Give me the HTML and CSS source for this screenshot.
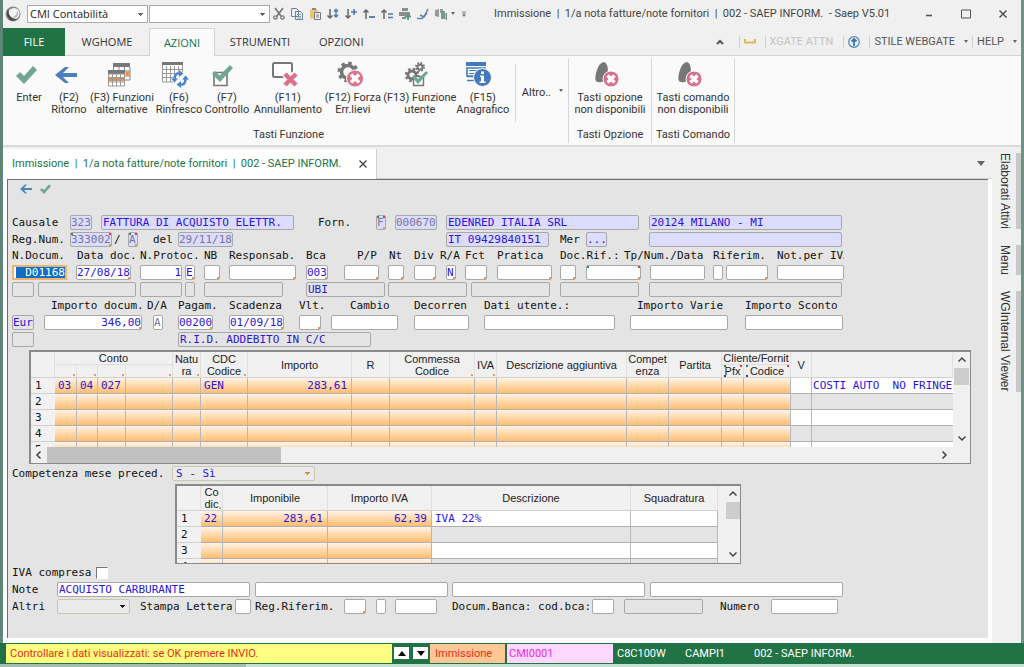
FILE: index.html
```html
<!DOCTYPE html>
<html lang="it">
<head>
<meta charset="utf-8">
<title>Immissione | 1/a nota fatture/note fornitori</title>
<link rel="stylesheet" href="styles.css">
</head>
<body>
<div class="window">
  <header class="titlebar">
    <svg class="app-logo" viewBox="0 0 16 16"><circle cx="8" cy="8" r="7.500" fill="#8c8c8c"/><circle cx="9" cy="7.500" r="5.500" fill="#f4f4f4"/><path d="M3 3Q0 9 5 14Q9 16 12 13Q6 13 4 8Z" fill="#4a4a4a"/><path d="M7 11Q12 10 12 4Q15 9 10 12Z" fill="#bbb"/></svg>
    <div class="pickers">
      <select class="picker" aria-label="Ambiente"><option>CMI Contabilità</option></select>
      <select class="picker" aria-label="Funzione"><option></option></select>
    </div>
    <div class="quick">
      <button aria-label="Taglia"><svg viewBox="0 0 12 12"><path d="M2 0L8 8M10 0L4 8" stroke="#777" stroke-width="1.600" fill="none"/><circle cx="2.500" cy="9.500" r="1.700" fill="none" stroke="#777" stroke-width="1.300"/><circle cx="9.500" cy="9.500" r="1.700" fill="none" stroke="#777" stroke-width="1.300"/></svg></button>
      <button aria-label="Copia"><svg viewBox="0 0 12 12"><path d="M.5 .5h5l2 2v6h-7zM4.500 3.500h5l2 2v6h-7z" fill="#e9eff5" stroke="#6d8199"/><path d="M6 6.500h4M6 8.500h4M6 10h4" stroke="#6d8fb8" stroke-width=".8"/></svg></button>
      <button aria-label="Incolla"><svg viewBox="0 0 12 12"><path d="M1 1.500h8v9H1z" fill="#e8c577"/><path d="M3 0h4v2H3z" fill="#888"/><path d="M5.500 4.500h6v7h-6z" fill="#f4f4f4" stroke="#777"/><path d="M7 7h3M7 9h3" stroke="#777"/></svg></button>
      <button aria-label="Pagina giù"><svg viewBox="0 0 12 12"><path d="M3 1v9M.5 7.500L3 10l2.500-2.500" stroke="#666" stroke-width="1.500" fill="none"/><path d="M9 1v8M7 3.500L9 1.500l2 2M7 7l2 2 2-2" stroke="#4a79b0" stroke-width="1.400" fill="none"/></svg></button>
      <button aria-label="Aggiungi giù"><svg viewBox="0 0 12 12"><path d="M3 1v9M.5 7.500L3 10l2.500-2.500" stroke="#666" stroke-width="1.500" fill="none"/><path d="M9 1v6M6 4h6" stroke="#4a79b0" stroke-width="1.600"/></svg></button>
      <button aria-label="Riga su"><svg viewBox="0 0 12 12"><path d="M3 11V2M.5 4.500L3 2l2.500 2.500" stroke="#666" stroke-width="1.500" fill="none"/><path d="M6 9h6" stroke="#4a79b0" stroke-width="1.800"/></svg></button>
      <button aria-label="Righe su"><svg viewBox="0 0 12 12"><path d="M3 11V2M.5 4.500L3 2l2.500 2.500" stroke="#666" stroke-width="1.500" fill="none"/><path d="M7 6h5M7 9.500h5" stroke="#4a79b0" stroke-width="1.500"/></svg></button>
      <button aria-label="Stampa"><svg viewBox="0 0 12 12"><path d="M3 0h6v3H3zM0 4h11v4H0zM3 9h4v2H3z" fill="#8d8d8d"/><path d="M9 5v7M5.500 8.500H12" stroke="#5a9d7a" stroke-width="2"/></svg></button>
      <button aria-label="Strumenti"><svg viewBox="0 0 12 12"><path d="M11 1L7 9 3 7" stroke="#777" stroke-width="1.400" fill="none"/><path d="M0 10.500h5L10 5" stroke="#5b86c0" stroke-width="1.700" fill="none"/></svg></button>
      <button aria-label="Esporta"><svg viewBox="0 0 12 12"><path d="M0 2l4-1v8l-4-1zM5 1h3v4H5z" fill="#999"/><path d="M6 3h4v8H6z" fill="#6aa186"/><path d="M10.500 5H12v7h-1.500z" fill="#888"/></svg></button>
    </div>
    <span class="caret"></span>
    <svg class="more" viewBox="0 0 6 8"><path d="M0 1h6M0 3.500h6" stroke="#666"/><path d="M0 5h6L3 8z" fill="#666"/></svg>
    <h1 class="title">Immissione &nbsp;|&nbsp; 1/a nota fatture/note fornitori &nbsp;|&nbsp; 002 - SAEP INFORM. &nbsp;- Saep V5.01</h1>
    <div class="winbtns">
      <button aria-label="Riduci"><svg viewBox="0 0 10 10"><path d="M2 6.500h6" stroke="#555" stroke-width="1.600"/></svg></button>
      <button aria-label="Ingrandisci"><svg viewBox="0 0 10 10"><path d="M.5 1h9v8h-9z" fill="none" stroke="#555"/></svg></button>
      <button aria-label="Chiudi"><svg viewBox="0 0 10 10"><path d="M1.500 1.500l7 7M8.500 1.500l-7 7" stroke="#444" stroke-width="1.300"/></svg></button>
    </div>
  </header>

  <nav class="tabs">
    <button class="tab file">FILE</button>
    <button class="tab home">WGHOME</button>
    <button class="tab active">AZIONI</button>
    <button class="tab tools">STRUMENTI</button>
    <button class="tab">OPZIONI</button>
    <div class="tab-extra">
      <button class="fold" aria-label="Riduci barra"><svg width="8" height="6" viewBox="0 0 8 6"><path d="M1 5l3-3 3 3" fill="none" stroke="#555" stroke-width="2"/></svg></button>
      <span class="vline"></span>
      <svg class="tray" viewBox="0 0 12 5"><path d="M1 0v3.500h10V0" fill="none" stroke="#e0b95a" stroke-width="2"/></svg>
      <span class="vline"></span>
      <span class="muted">XGATE ATTN</span>
      <span class="vline"></span>
      <svg class="up" viewBox="0 0 12 12"><circle cx="6" cy="6" r="5.300" fill="none" stroke="#4a86bd" stroke-width="1.200"/><path d="M6 10V3M3.500 5.500L6 3l2.500 2.500" stroke="#3a76b0" stroke-width="1.800" fill="none"/></svg>
      <span class="vline"></span>
      <button class="link">STILE WEBGATE</button><span class="caret"></span>
      <span class="vline"></span>
      <button class="link help">HELP</button><span class="caret"></span>
    </div>
  </nav>

  <section class="ribbon">
    <div class="group functions">
      <div class="cmds">
        <button class="cmd w-s"><svg class="nudge" viewBox="0 0 26 26"><path d="M3 14l4-4 4 4L20 4l4 4-13 14z" fill="#70a692"/></svg><span>Enter</span></button>
        <button class="cmd w-s"><svg viewBox="0 0 26 26"><path d="M-1 13L9 5h4l-6 6h14v4H7l6 6H9z" fill="#4a7fbd"/></svg><span>(F2)<br>Ritorno</span></button>
        <button class="cmd w-l"><svg viewBox="0 0 26 26"><path d="M4 1h17v4H4z" fill="#777"/><path d="M4.500 5v3M21 5v13h-5M16 9h5M16 14h5M10 5v3M15.500 5v3" fill="none" stroke="#888"/><path d="M16.500 9.500h4v4h-4z" fill="#ef8b3c"/><path d="M-1 8h17v4H-1z" fill="#777"/><path d="M-.5 12h16v12H-.5zM-1 15.500h17M-1 20h17M3.500 12v12M7.500 12v12M11.500 12v12" fill="#fff" stroke="#999"/><path d="M0 16h3v3H0zM4 16h3v3H4zM8 16h3v3H8zM12 16h3v3h-3z" fill="#ef8b3c"/></svg><span>(F3) Funzioni<br>alternative</span></button>
        <button class="cmd w-m"><svg viewBox="0 0 26 26"><path d="M-4 0h21v4H-4z" fill="#777"/><path d="M-3.500 3v17h20V3M-3.500 7.500h20M-3.500 11.500h20M-3.500 15.500h20M.5 4v16M4.500 4v16M8.500 4v16M12.500 4v16" fill="#fff" stroke="#999"/><circle cx="14" cy="17" r="7.500" fill="#fafafa"/><path d="M13 11.500h-1.500Q8.500 12 8.500 18M15 22.500h1.500Q19.500 22 19.500 16" fill="none" stroke="#4a86cf" stroke-width="2.600"/><path d="M13 8l4.500 3.500L13 15zM15 19l-4.500 3.500L15 26zM5 16.500h7L8.500 20.500zM16 17.500h7L19.500 13.500z" fill="#4a86cf"/></svg><span>(F6)<br>Rinfresco</span></button>
        <button class="cmd w-m"><svg viewBox="0 0 26 26"><path d="M0 10.500h13v13H0z" fill="none" stroke="#777" stroke-width="1.600"/><path d="M-2 12l3-3 4.500 4.500L16 3l3 3L6 20z" fill="#70a692"/></svg><span>(F7)<br>Controllo</span></button>
        <button class="cmd w-x"><svg viewBox="0 0 26 26"><rect x="-2" y="1" width="19" height="14" rx="1.500" fill="#fff" stroke="#777" stroke-width="2"/><path d="M9 11l12 12M21 11L9 23" stroke="#fafafa" stroke-width="7"/><path d="M10 12l11 11M21 12L10 23" stroke="#dd7189" stroke-width="4.500"/></svg><span>(F11)<br>Annullamento</span></button>
        <button class="cmd w-f"><svg viewBox="0 0 26 26"><circle cx="8" cy="10" r="6.500" fill="none" stroke="#777" stroke-width="3.500"/><circle cx="8" cy="10" r="9" fill="none" stroke="#777" stroke-width="3" stroke-dasharray="3.500 3.569"/><circle cx="15" cy="16.500" r="8.500" fill="#dd7189" stroke="#fafafa"/><path d="M11 12.500l8 8M19 12.500l-8 8" stroke="#fff" stroke-width="3.500"/></svg><span>(F12) Forza<br>Err.lievi</span></button>
        <button class="cmd w-y"><svg viewBox="0 0 26 26"><circle cx="5" cy="13" r="4" fill="none" stroke="#777" stroke-width="2.800"/><circle cx="5" cy="13" r="6" fill="none" stroke="#777" stroke-width="2.500" stroke-dasharray="2.500 2.212"/><circle cx="13" cy="5" r="2.500" fill="none" stroke="#777" stroke-width="2"/><circle cx="13" cy="5" r="4" fill="none" stroke="#777" stroke-width="2" stroke-dasharray="1.700 1.442"/><path d="M6.500 14.500h10v9h-10z" fill="#fafafa" stroke="#777" stroke-width="1.400"/><path d="M5 15l2-2 4 4 8-8 2 2-10 11z" fill="#70a692"/></svg><span>(F13) Funzione<br>utente</span></button>
        <button class="cmd w-m"><svg viewBox="0 0 26 26"><path d="M-4 0h20v4H-4z" fill="#4379bd"/><path d="M-3 6h18v8H-3zM-3 14.500H9v4H-3" fill="#fff" stroke="#4379bd" stroke-width="1.600"/><path d="M-1 8.500h13M-1 11.500h6" stroke="#4379bd"/><circle cx="12.500" cy="15.500" r="9" fill="#4379bd" stroke="#fafafa"/><path d="M11 9.500h3v2.500h-3zM10 13.500h4v6h1.500v1.500h-6v-1.500H11v-4.500h-1z" fill="#fff"/></svg><span>(F15)<br>Anagrafico</span></button>
        <button class="altro">Altro..<i class="caret"></i></button>
      </div>
      <h2>Tasti Funzione</h2>
    </div>
    <div class="group">
      <div class="cmds"><button class="cmd wide"><svg viewBox="0 0 26 26"><path d="M1 20Q-3 20-1 11Q2 0 7 0Q11 1 11 10L8 18Q5 21 1 20z" fill="#777"/><circle cx="14" cy="17" r="8" fill="#d86f8b" stroke="#fafafa"/><path d="M10.500 13.500l7 7M17.500 13.500l-7 7" stroke="#fff" stroke-width="3.500"/></svg><span>Tasti opzione<br>non disponibili</span></button></div>
      <h2>Tasti Opzione</h2>
    </div>
    <div class="group">
      <div class="cmds"><button class="cmd wide"><svg viewBox="0 0 26 26"><path d="M1 20Q-3 20-1 11Q2 0 7 0Q11 1 11 10L8 18Q5 21 1 20z" fill="#777"/><circle cx="14" cy="17" r="8" fill="#d86f8b" stroke="#fafafa"/><path d="M10.500 13.500l7 7M17.500 13.500l-7 7" stroke="#fff" stroke-width="3.500"/></svg><span>Tasti comando<br>non disponibili</span></button></div>
      <h2>Tasti Comando</h2>
    </div>
  </section>

  <div class="work">
    <div class="docs">
      <div class="doctabs">
        <div class="doctab"><span>Immissione &nbsp;|&nbsp; 1/a nota fatture/note fornitori &nbsp;|&nbsp; 002 - SAEP INFORM.</span><button aria-label="Chiudi scheda"><svg width="8" height="8" viewBox="0 0 8 8"><path d="M.5 .5l7 7M7.500 .5l-7 7" stroke="#444" stroke-width="1.400"/></svg></button></div>
        <button class="doclist" aria-label="Elenco schede"><svg width="8" height="5" viewBox="0 0 8 5"><path d="M0 0h8L4 5z" fill="#666"/></svg></button>
      </div>
      <main class="panel">
        <div class="minibar">
          <button aria-label="Indietro"><svg viewBox="0 0 12 10"><path d="M0 5l5-4.500h2L4 4h8v2H4l3 3.500H5z" fill="#4a86bd"/></svg></button>
          <button aria-label="Conferma"><svg viewBox="0 0 12 10"><path d="M1 6l2-2 2 2 5-5.500 2 1.500L5 10z" fill="#70a692"/></svg></button>
        </div>

        <form class="form">
          <div class="row r1">
            <label for="causale">Causale</label><input id="causale" class="c3 key dim" value="323">
            <input class="c30 key" aria-label="Descrizione causale" value="FATTURA DI ACQUISTO ELETTR.">
            <label for="forn">Forn.</label><input id="forn" class="c1 key dim marks" value="F">
            <input class="c6 key dim" aria-label="Codice fornitore" value="000670">
            <input class="c30 key" aria-label="Fornitore" value="EDENRED ITALIA SRL">
            <input class="c30 key" aria-label="Località" value="20124 MILANO - MI">
          </div>
          <div class="row r2">
            <label for="reg">Reg.Num.</label><input id="reg" class="c6 key dim marks" value="333002"><span>/</span>
            <input class="c1 key dim marks" aria-label="Serie" value="A">
            <label for="del">del</label><input id="del" class="c8 key dim" value="29/11/18">
            <input class="c16 key" aria-label="Partita IVA" value="IT 09429840151">
            <span>Mer</span><button type="button" class="dots key">...</button>
            <input class="c30 key" aria-label="Note località">
          </div>
          <div class="row r3 caps">
            <label for="ndoc">N.Docum.</label><label for="ddoc">Data doc.</label><label for="prot">N.Protoc.</label><label for="nb">NB</label><label for="resp">Responsab.</label><label for="bca">Bca</label><label for="pp">P/P</label><label for="nt">Nt</label><label for="div">Div</label><label for="ra">R/A</label><label for="fct">Fct</label><label for="prat">Pratica</label><label for="rif">Doc.Rif.:</label><label for="tp">Tp/Num./Data</label><label for="rfm">Riferim.</label><label for="iva">Not.per IVA</label>
          </div>
          <div class="row r4">
            <div class="focus"><input id="ndoc" value="D01168"></div>
            <input id="ddoc" class="c8 tick" value="27/08/18">
            <input id="prot" class="c6 num" value="1"><input class="c1 tick" aria-label="Serie protocollo" value="E">
            <input id="nb" class="c2 tick"><input id="resp" class="c10 tick"><input id="bca" class="c3 tick" value="003"><input id="pp" class="c5 tick"><input id="nt" class="c2 tick"><input id="div" class="c3 tick"><input id="ra" class="c1 tick" value="N"><input id="fct" class="c3 tick"><input id="prat" class="c8 tick"><input id="rif" class="c2 tick"><input class="c8 marks" aria-label="Numero rif."><input id="tp" class="c8"><input id="rfm" class="c1"><input class="c6 tick" aria-label="Numero riferim."><input id="iva" class="c10">
          </div>
          <div class="row r5">
            <input class="c3 off" aria-label="a1"><input class="c15 off" aria-label="a2"><input class="c6 off" aria-label="a3"><input class="c1 off" aria-label="a4"><input class="c12 off" aria-label="a5"><input class="c12 off" aria-label="Banca" value="UBI"><input class="c12 off" aria-label="a6"><input class="c12 off" aria-label="a7"><input class="c12 off" aria-label="a8"><input class="c30 off" aria-label="a9">
          </div>
          <div class="row r6 caps">
            <label for="imp">Importo docum.</label><label for="da">D/A</label><label for="pag">Pagam.</label><label for="scad">Scadenza</label><label for="vlt">Vlt.</label><label for="cam">Cambio</label><label class="clip" for="dec">Decorrenz</label><label for="dati">Dati utente.:</label><label for="var">Importo Varie</label><label for="sco">Importo Sconto</label>
          </div>
          <div class="row r7">
            <input class="c3 off" aria-label="Valuta" value="Eur"><input id="imp" class="c15 num tick" value="346,00"><input id="da" class="c1 gray" value="A"><input id="pag" class="c5 tick" value="00200"><input id="scad" class="c8 tick" value="01/09/18"><input id="vlt" class="c3 tick"><input id="cam" class="c10"><input id="dec" class="c8"><input id="dati" class="c20"><input id="var" class="c15"><input id="sco" class="c15">
          </div>
          <div class="row r8"><input class="c3 off" aria-label="Valuta 2"><input class="c30 off" aria-label="Pagamento" value="R.I.D. ADDEBITO IN C/C"></div>

          <div class="sheet main-sheet">
            <div class="view">
              <table>
                <colgroup><col class="k24"><col class="k22"><col class="k21"><col class="k28"><col class="k47"><col class="k28"><col class="k47"><col class="k104"><col class="k38"><col class="k85"><col class="k22"><col class="k130"><col class="k42"><col class="k53"><col class="k22"><col class="k47"><col class="k21"><col></colgroup>
                <thead>
                  <tr class="h1"><th rowspan="2"></th><th colspan="4" class="under">Conto</th><th rowspan="2" class="tk">Natu<br>ra</th><th rowspan="2" class="tk">CDC<br>Codice</th><th rowspan="2">Importo</th><th rowspan="2">R</th><th rowspan="2" class="tk">Commessa<br>Codice</th><th rowspan="2" class="tk">IVA</th><th rowspan="2">Descrizione aggiuntiva</th><th rowspan="2">Compet<br>enza</th><th rowspan="2">Partita</th><th colspan="2" class="under">Cliente/Fornit</th><th rowspan="2">V</th><th rowspan="2"></th></tr>
                  <tr class="h2"><th class="tk"></th><th class="tk"></th><th class="tk"></th><th class="tk"></th><th class="tk4">Pfx</th><th class="tk4">Codice</th></tr>
                </thead>
                <tbody>
                  <tr><th>1</th><td>03</td><td>04</td><td>027</td><td></td><td></td><td>GEN</td><td class="num">283,61</td><td></td><td></td><td></td><td></td><td></td><td></td><td></td><td></td><td class="plain"></td><td class="plain">COSTI AUTO&nbsp; NO FRINGE</td></tr>
                  <tr><th>2</th><td></td><td></td><td></td><td></td><td></td><td></td><td></td><td></td><td></td><td></td><td></td><td></td><td></td><td></td><td></td><td class="plain"></td><td class="plain"></td></tr>
                  <tr><th>3</th><td></td><td></td><td></td><td></td><td></td><td></td><td></td><td></td><td></td><td></td><td></td><td></td><td></td><td></td><td></td><td class="plain"></td><td class="plain"></td></tr>
                  <tr><th>4</th><td></td><td></td><td></td><td></td><td></td><td></td><td></td><td></td><td></td><td></td><td></td><td></td><td></td><td></td><td></td><td class="plain"></td><td class="plain"></td></tr>
                  <tr><th>5</th><td></td><td></td><td></td><td></td><td></td><td></td><td></td><td></td><td></td><td></td><td></td><td></td><td></td><td></td><td></td><td class="plain"></td><td class="plain"></td></tr>
                </tbody>
              </table>
            </div>
            <div class="vscroll"><svg viewBox="0 0 8 5"><path d="M0.500 4.500L4 1l3.500 3.500"/></svg><i></i><svg class="end" viewBox="0 0 8 5"><path d="M0.500 .5L4 4 7.500 .5"/></svg></div>
            <div class="hscroll"><svg viewBox="0 0 5 8"><path d="M4.500 .5L1 4l3.500 3.500"/></svg><i></i><svg class="end" viewBox="0 0 5 8"><path d="M.5 .5L4 4 .5 7.500"/></svg></div>
          </div>

          <div class="row rc"><label for="comp">Competenza mese preced.</label><select id="comp" class="combo hot"><option>S - Sì</option></select></div>

          <div class="sheet vat-sheet">
            <div class="view">
              <table>
                <colgroup><col class="k24"><col class="k22"><col class="k105"><col class="k104"><col class="k199"><col></colgroup>
                <thead><tr><th></th><th class="tk">Co<br>dic</th><th>Imponibile</th><th>Importo IVA</th><th>Descrizione</th><th>Squadratura</th></tr></thead>
                <tbody>
                  <tr><th>1</th><td>22</td><td class="num">283,61</td><td class="num">62,39</td><td class="plain">IVA 22%</td><td class="plain"></td></tr>
                  <tr><th>2</th><td></td><td></td><td></td><td class="plain"></td><td class="plain"></td></tr>
                  <tr><th>3</th><td></td><td></td><td></td><td class="plain"></td><td class="plain"></td></tr>
                  <tr><th>4</th><td></td><td></td><td></td><td class="plain"></td><td class="plain"></td></tr>
                </tbody>
              </table>
            </div>
            <div class="vscroll"><svg viewBox="0 0 8 5"><path d="M0.500 4.500L4 1l3.500 3.500"/></svg><i></i><svg class="end" viewBox="0 0 8 5"><path d="M0.500 .5L4 4 7.500 .5"/></svg></div>
          </div>

          <div class="row check"><label for="ivac">IVA compresa</label><input id="ivac" type="checkbox"></div>
          <div class="row rn"><label for="note">Note</label><input id="note" class="c30" value="ACQUISTO CARBURANTE"><input class="c30" aria-label="Nota 2"><input class="c30" aria-label="Nota 3"><input class="c30" aria-label="Nota 4"></div>
          <div class="row ra"><label for="altri">Altri</label><select id="altri" class="combo"><option></option></select><label for="sl">Stampa Lettera</label><input id="sl" class="c2"><label for="rr">Reg.Riferim.</label><input id="rr" class="c3 tick"><input class="c1" aria-label="Serie rif."><input class="c6" aria-label="Numero reg."><label for="db">Docum.Banca: cod.bca:</label><input id="db" class="c3"><input class="c12 off" aria-label="Banca documento"><label for="num">Numero</label><input id="num" class="c10"></div>
        </form>
      </main>
    </div>
    <aside class="side">
      <button>Elaborati Attivi</button>
      <button>Menu</button>
      <button>WGInternal Viewer</button>
    </aside>
  </div>

  <footer class="status">
    <div class="msg">Controllare i dati visualizzati: se OK premere INVIO.</div>
    <button class="step" aria-label="Precedente"><svg viewBox="0 0 8 5"><path d="M0 5l4-5 4 5z"/></svg></button>
    <button class="step" aria-label="Successivo"><svg viewBox="0 0 8 5"><path d="M0 0h8L4 5z"/></svg></button>
    <div class="mode">Immissione</div>
    <div class="prog">CMI0001</div>
    <div class="sys">C8C100W</div><div class="lib">CAMPI1</div><div class="firm">002 - SAEP INFORM.</div>
  </footer>
</div>
</body>
</html>
```
FILE: styles.css
```css
* { box-sizing: border-box; }
body {
  margin: 0;
  height: 100vh;
  overflow: hidden;
  background: linear-gradient(90deg, #a3bfb4 0 24%, #c5e0d4 24%) bottom / 100% 3px no-repeat, linear-gradient(90deg, #5f8577, #6b9486);
  font: 11px/12px Roboto, "Open Sans", sans-serif;
  color: #444;
}
button, input, select { font: inherit; color: inherit; border: 0; padding: 0; margin: 0; background: none; border-radius: 0; }
h1, h2 { margin: 0; font: inherit; }
svg { display: block; overflow: visible; }
.window { height: calc(100vh - 3px); margin: 0 3px; display: flex; flex-direction: column; background: #f0f0f0; }
.caret { display: inline-block; border: 2px solid transparent; border-top: 3px solid #666; border-bottom: 0; }

/* title bar */
.titlebar { height: 28px; display: flex; align-items: center; padding: 0 13px 1px 2px; flex: none; }
.app-logo { width: 16px; height: 16px; margin-right: 6px; }
.pickers { display: flex; gap: 1px; }
.picker { width: 121px; height: 18px; appearance: none; border: 1px solid #ababab; padding: 0 2px; color: #222; font: 11px/16px "Open Sans", sans-serif;
  background: linear-gradient(#666, #666) right 4px top 7px / 5px 1px no-repeat, linear-gradient(#666, #666) right 5px top 8px / 3px 1px no-repeat, linear-gradient(#666, #666) right 6px top 9px / 1px 1px no-repeat, #fff; }
.quick { display: flex; gap: 5px; margin-left: 3px; }
.quick svg { width: 12px; height: 12px; }
.quick button { width: 13px; }
.titlebar .caret { margin: 0 7px 0 3px; }
.more { width: 4px; height: 6px; }
.title { flex: 1; margin-left: 28px; white-space: pre; }
.winbtns { display: flex; gap: 27px; }
.winbtns svg { width: 10px; height: 10px; }

/* ribbon tabs */
.tabs { height: 28px; flex: none; display: flex; border-bottom: 1px solid #d4d4d4; font-family: "Open Sans", sans-serif; }
.tab { padding: 0 14px; color: #333; height: 28px; }
.tab.file { width: 62px; background: #217346; color: #fff; }
.tab.home { width: 84px; }
.tab.active { width: 66px; padding: 0; background: #fafafa; border: 1px solid #d4d4d4; border-bottom: 0; color: #217346; }
.tab.tools { width: 90px; }
.tab-extra { margin-left: auto; display: flex; align-items: center; color: #555; padding-right: 4px; font-family: Roboto, sans-serif; }
.tab-extra .caret { margin: 0 4px 0 9px; }
.tab-extra .caret:last-child { margin-right: 0; }
.vline { width: 1px; height: 12px; background: #d0d0d0; margin-right: 4px; }
.fold { margin-right: 15px; }
.tray { width: 12px; height: 5px; margin-right: 9px; }
.muted { color: #c4c4c4; margin-right: 10px; }
.up { width: 12px; height: 12px; margin-right: 9px; }

/* ribbon */
.ribbon { height: 91px; flex: none; display: flex; background: #fafafa; border-bottom: 2px solid #dadada; padding: 2px 0 2px 6px; color: #333; }
.group { display: flex; flex-direction: column; justify-content: space-between; border-right: 1px solid #d8d8d8; }
.group h2 { text-align: center; line-height: 16px; }
.cmds { display: flex; align-items: flex-start; }
.cmd { display: flex; flex-direction: column; align-items: center; white-space: nowrap; padding-top: 4px; gap: 4px; }
.cmd svg { width: 26px; height: 26px; }
.cmd .nudge { margin-right: 6px; }
.cmd span { line-height: 12px; }
.w-s { width: 40px; } .w-m { width: 48px; } .w-l { width: 66px; } .w-x { width: 74px; } .w-f { width: 56px; } .w-y { width: 78px; }
.wide { width: 82px; }
.altro { height: 58px; margin: 6px 5px 0 8px; padding-left: 6px; border-left: 1px solid #d8d8d8; white-space: nowrap; }
.altro .caret { margin-left: 8px; vertical-align: 4px; }
.functions { width: 560px; }

/* work area */
.work { flex: 1; display: flex; min-height: 0; }
.docs { flex: 1; min-width: 0; display: flex; flex-direction: column; background: #fff; }
.doctabs { height: 32px; flex: none; display: flex; justify-content: space-between; background: #f0f0f0; border-bottom: 1px solid #d0d0d0; padding-top: 2px; }
.doctab { display: flex; align-items: center; gap: 18px; padding: 0 9px; margin-bottom: -1px; background: #fff; border-right: 1px solid #d0d0d0; color: #217346; white-space: nowrap; }
.doclist { margin-right: 7px; }
.panel { flex: 1; margin: 0 4px 5px 4px; background: #e4e4e4; border: solid #6e6e6e; border-width: 1px 0 0 1px; padding: 4px 17px 0 4px; overflow: hidden; }
.minibar { display: flex; gap: 7px; padding-left: 8px; }
.minibar svg { width: 12px; height: 10px; }

/* form */
.form { font: 11px/14px "DejaVu Sans Mono", monospace; color: #111; display: flex; flex-direction: column; gap: 2px; padding-top: 21px; }
.row { display: grid; height: 15px; white-space: nowrap; justify-content: start; align-items: center; }
.row.caps { height: 14px; }
.r1 { grid-template-columns: 58px 31px 217px 58px 19px 51px 203px 193px; }
.r2 { grid-template-columns: 58px 44px 14px 25px 25px 268px 114px 26px 63px 193px; }
.r3 { grid-template-columns: 65px 63px 64px 25px 77px 51px 32px 25px 26px 25px 32px 63px 64px 89px 64px 67px; }
.r4 { grid-template-columns: 64px 64px 45px 19px 25px 77px 38px 44px 26px 32px 19px 32px 63px 26px 64px 63px 13px 51px 67px; }
.r5 { grid-template-columns: 26px 102px 45px 19px 102px 82px 83px 89px 89px 193px; }
.r6 { grid-template-columns: 96px 31px 51px 70px 51px 64px 70px 153px 108px 98px; padding-left: 39px; }
.r7 { grid-template-columns: 32px 109px 25px 51px 70px 32px 83px 70px 146px 115px 98px; }
.r8 { grid-template-columns: 166px 193px; }
.rc { grid-template-columns: 160px 143px; }
.rn { grid-template-columns: 45px 198px 197px 198px 193px; }
.ra { grid-template-columns: 45px 83px 95px 20px 89px 32px 19px 57px 140px 32px 96px 51px 67px; }
.check { grid-template-columns: 84px 12px; height: 14px; }
.r3 label:last-child { overflow: hidden; }
.clip { overflow: hidden; width: 53px; }
.row input { height: 15px; border: 1px solid #a8a8a8; border-radius: 2px; background-color: #fff; color: #2c14dc; line-height: 13px; }
.c1 { width: 10px; } .c2 { width: 16px; } .c3 { width: 22px; } .c5 { width: 35px; } .c6 { width: 42px; } .c8 { width: 55px; } .c10 { width: 67px; }
.c12 { width: 79px; } .c15 { width: 98px; } .c16 { width: 103px; } .c20 { width: 131px; } .c30 { width: 193px; }
.row .c30, .row .c16, .row .c12 { padding-left: 1px; }
.row .key { background-color: #dcdcff; color: #2c14dc; }
.row .dim, .row .gray { color: #77779a; }
.row .off { background-color: #e4e4e4; }
.num { text-align: right; }
.row .tick { background-image: linear-gradient(#e89a4a, #e89a4a); background-position: right bottom; background-size: 2px 2px; background-repeat: no-repeat; }
.row .marks { background-image: linear-gradient(#d33, #d33), linear-gradient(#385, #385), linear-gradient(#e89a4a, #e89a4a); background-position: right top, left top, right bottom; background-size: 2px 2px; background-repeat: no-repeat; }
.focus { width: 55px; height: 15px; border: 2px solid #f3b469; background: #0f6fc6; display: flex; }
.row .focus input { width: 100%; height: 11px; border: 0; border-radius: 0; background: linear-gradient(#fff, #fff) left / 2px 100% no-repeat; color: #fff; text-align: right; line-height: 11px; }
.dots { width: 21px; height: 15px; border: 1px solid #a8a8a8; border-radius: 2px; line-height: 11px; }
.combo { height: 15px; appearance: none; border: 1px solid #ccc8ae; border-radius: 2px; padding: 0 3px; color: #2c14dc; line-height: 13px; }
.rc .combo { width: 143px; }
.ra .combo { width: 73px; }
.row .combo { background: linear-gradient(#222, #222) right 4px top 5px / 5px 1px no-repeat, linear-gradient(#222, #222) right 5px top 6px / 3px 1px no-repeat, linear-gradient(#222, #222) right 6px top 7px / 1px 1px no-repeat, #eaeaea; }
.row .hot { background-image: linear-gradient(#d98a35, #d98a35), linear-gradient(#d98a35, #d98a35), linear-gradient(#d98a35, #d98a35); }
.row input[type="checkbox"] { appearance: none; width: 12px; height: 12px; border: 1px solid #777; border-right-color: #fff; border-bottom-color: #fff; border-radius: 0; }

/* sheets */
.sheet { display: grid; border: 2px solid #8a8a8a; border-right-width: 1px; border-bottom-width: 1px; background: #f0f0f0; overflow: hidden; }
.main-sheet { grid-template: 95px 16px / 1fr 17px; width: 942px; max-width: 100%; margin: 1px 0 0 17px; }
.vat-sheet { grid-template: 77px / 541px 7px 16px; width: 566px; margin: 1px 0 0 163px; }
.vat-sheet .vscroll { grid-column: 3; }
.view { overflow: hidden; }
table { width: 100%; table-layout: fixed; border-collapse: separate; border-spacing: 0; }
thead th { font: 11px/12px "Liberation Sans", sans-serif; color: #222; border-right: 1px solid #e0e0e0; border-bottom: 1px solid #d0d0d0; background-color: #f1f1f1; padding: 0; height: 25px; overflow: hidden; }
.h1 .under { height: 13px; border-bottom-color: #ddd; }
.h2 th { height: 13px; }
.tk { background: linear-gradient(#d8a860, #d8a860) right 1px bottom 1px / 2px 2px no-repeat; }
.tk4 { background: linear-gradient(#33a, #33a) 2px bottom / 2px 2px no-repeat, linear-gradient(#d33, #d33) right 1px top / 2px 2px no-repeat, linear-gradient(#385, #385) 2px top / 2px 2px no-repeat; }
tbody th { font-weight: 400; text-align: left; padding: 0 0 0 4px; background: #f1f1f1; height: 16px; line-height: 14px; border-bottom: 1px solid #d0d0d0; }
tbody td { height: 16px; line-height: 14px; padding: 0 3px; white-space: nowrap; color: #2c14dc; background: linear-gradient(#fff4e8, #ffbd6e); border-right: 1px solid #b8b8b8; border-bottom: 1px solid #b0b0b0; }
tbody td:last-child { padding-right: 0; }
td.num { padding-right: 4px; }
td.plain { background: #fff; }
.main-sheet td:last-child { padding-left: 1px; border-right: 0; }
tbody tr:nth-child(even) .plain { background: #e4e4e4; }
.k21 { width: 21px; } .k22 { width: 22px; } .k24 { width: 24px; } .k28 { width: 28px; } .k38 { width: 38px; } .k42 { width: 42px; } .k47 { width: 47px; } .k53 { width: 53px; } .k85 { width: 85px; } .k104 { width: 104px; } .k105 { width: 105px; } .k130 { width: 130px; } .k199 { width: 199px; }
.vscroll { display: flex; flex-direction: column; align-items: center; padding: 5px 0 6px; }
.vscroll svg { width: 8px; height: 5px; flex: none; }
.vscroll i { width: 15px; height: 17px; background: #cdcdcd; margin-top: 6px; }
.sheet path { fill: none; stroke: #444; stroke-width: 1.500; }
.vscroll .end { margin-top: auto; }
.hscroll { grid-column: 1 / -1; display: flex; align-items: center; padding: 0 23px 0 5px; }
.hscroll svg { width: 5px; height: 8px; }
.hscroll i { width: 234px; height: 16px; background: #c1c1c1; margin-left: 6px; }
.hscroll .end { margin-left: auto; }

/* side labels */
.side { width: 29px; flex: none; display: flex; flex-direction: column; align-items: flex-end; gap: 16px; padding-top: 6px; }
.side button { writing-mode: vertical-rl; font: 12px/18px "Liberation Sans", sans-serif; color: #333; border-right: 5px solid #c8c8c8; padding-right: 2px; }

/* status bar */
.status { height: 21px; flex: none; display: flex; align-items: stretch; background: #217346; color: #fff; margin: 0 -3px; padding: 1px 6px; line-height: 20px; white-space: nowrap; }
.msg { width: 386px; background: #ffff80; color: #e0301a; padding-left: 4px; }
.step { width: 15px; height: 12px; margin: 3px 0 0 2px; background: #fff; display: grid; place-items: center; }
.step + .step { margin-left: 4px; }
.step svg { width: 8px; height: 5px; }
.mode { width: 75px; margin-left: 2px; background: #ffc896; color: #e0301a; padding-left: 5px; }
.prog { width: 106px; margin-left: 2px; background: #ffd8ff; color: #e52fe5; padding-left: 2px; }
.sys { width: 72px; padding-left: 4px; }
.lib { width: 69px; }
```
